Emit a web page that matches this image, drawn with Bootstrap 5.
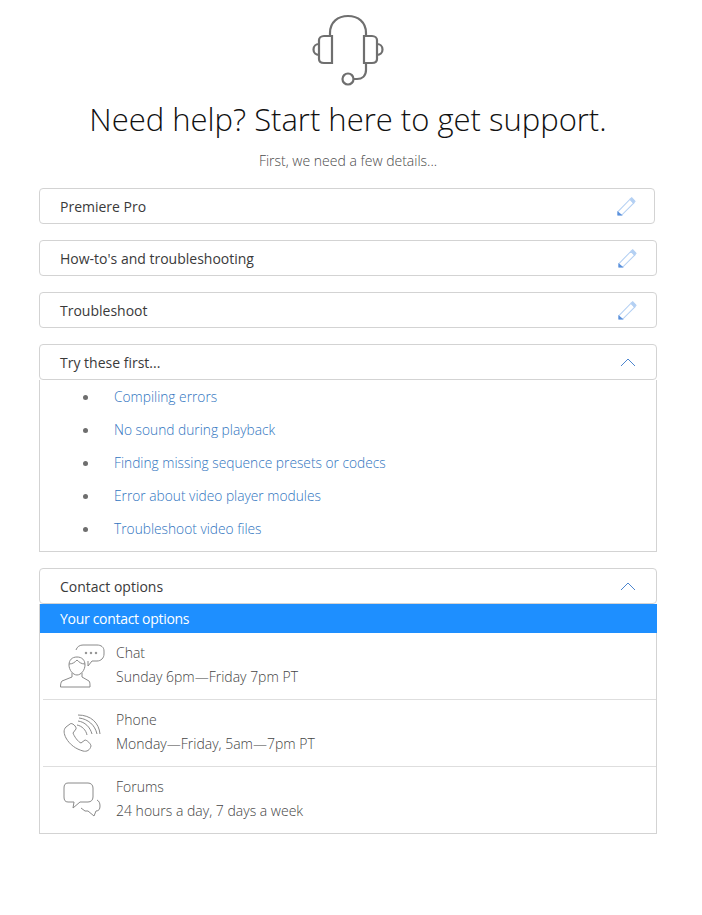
<!DOCTYPE html>
<html lang="en">
<head>
  <meta charset="UTF-8">
  <meta name="viewport" content="width=device-width, initial-scale=1">
  <title>Need help?</title>
  <link href="https://cdn.jsdelivr.net/npm/bootstrap@5.3.0/dist/css/bootstrap.min.css" rel="stylesheet">
  <style>
    body {
      font-family: "Open Sans", "Liberation Sans", sans-serif;
      font-weight: 300;
      color: #2c2c2c;
      background: #fff;
    }
    .help-page {
      width: 618px;
      margin-left: 39px;
      padding-top: 14px;
    }
    .help-top svg { display: block; margin: 0 auto; }
    .help-title {
      font-size: 31px;
      font-weight: 300;
      line-height: 40px;
      margin: 13px 0 0;
      color: #111;
      white-space: nowrap;
    }
    .help-sub {
      font-size: 14px;
      line-height: 20px;
      margin: 12px 0 17px;
      color: #4b4b4b;
    }
    .pick-box {
      height: 36px;
      border: 1px solid #d3d3d3;
      border-radius: 4px;
      padding: 0 19px 0 20px;
      font-size: 14px;
      font-weight: 400;
      margin-bottom: 16px;
      color: #3a3a3a;
    }
    .pick-box.first-box { margin-right: 2px; padding-right: 18px; }
    .pick-box.open-box { margin-bottom: 0; }
    .try-list {
      border: 1px solid #d3d3d3;
      border-top: 0;
      height: 172px;
      margin: 0 0 16px;
      padding: 0;
      list-style: none;
      font-size: 13.75px;
    }
    .try-list li {
      height: 33px;
      padding-left: 74px;
      position: relative;
      line-height: 33px;
    }
    .try-list li::before {
      content: "";
      position: absolute;
      left: 43px;
      top: 15px;
      width: 5px;
      height: 5px;
      border-radius: 50%;
      background: #6e6e6e;
    }
    .try-list a { color: #2f74c0; text-decoration: none; }
    .contact-wrap {
      border: 1px solid #d3d3d3;
      border-top: 0;
    }
    .contact-bar {
      background: #1e8fff;
      color: #fff;
      height: 29px;
      line-height: 29px;
      padding-left: 20px;
      font-size: 14px;
      font-weight: 400;
      letter-spacing: -.3px;
      margin: 0 -1px 0 0;
    }
    .contact-row {
      height: 67px;
      margin: 0 0 0 3px;
      border-bottom: 1px solid #dedede;
      color: #444;
      font-size: 14px;
    }
    .contact-row:last-child { border-bottom: 0; height: 66px; }
    .contact-ico { width: 73px; flex: none; display: flex; justify-content: center; padding-left: 4px; }
    .contact-txt { padding-bottom: 2px; }
    .contact-name { line-height: 24px; }
  </style>
</head>
<body>
  <div class="help-page">
    <div class="help-top text-center">
      <svg width="74" height="72" viewBox="0 0 74 72" fill="none" stroke="#6f6f6f" stroke-width="2.200">
        <path d="M19 22V19C19 8 27 2 37 2S55 8 55 19V22"/>
        <path d="M21 22H13C10 22 8 24 8 26V45C8 48 10 49 13 49H21Z"/>
        <path d="M53 22H61C64 22 66 24 66 26V45C66 48 64 49 61 49H53Z"/>
        <path d="M8 30C5 30 2.500 32 2.500 35.500S5 41 8 41"/>
        <path d="M66 30C69 30 71.500 32 71.500 35.500S69 41 66 41"/>
        <path d="M55 49V56C55 62 51 65 46 65H43"/>
        <circle cx="37" cy="65" r="5.500"/>
      </svg>
      <h1 class="help-title">Need help? Start here to get support.</h1>
      <p class="help-sub">First, we need a few details...</p>
    </div>

    <div class="pick-box first-box d-flex align-items-center justify-content-between">
      <span>Premiere Pro</span>
      <svg width="19" height="19" viewBox="0 0 20 20" fill="none" stroke="#b4d0f3" stroke-width="1.100">
        <path d="M1 15.500L13.500 2.500L17.500 6.500L5 19H1Z"/>
        <path d="M14 2L15.500 .8L19 4.500L17.500 6.500L14 2Z" fill="#b4d0f3"/>
        <path d="M1 16V19H4.500Z" fill="#5c92dc" stroke="#5c92dc"/>
      </svg>
    </div>
    <div class="pick-box d-flex align-items-center justify-content-between">
      <span>How-to's and troubleshooting</span>
      <svg width="19" height="19" viewBox="0 0 20 20" fill="none" stroke="#b4d0f3" stroke-width="1.100">
        <path d="M1 15.500L13.500 2.500L17.500 6.500L5 19H1Z"/>
        <path d="M14 2L15.500 .8L19 4.500L17.500 6.500L14 2Z" fill="#b4d0f3"/>
        <path d="M1 16V19H4.500Z" fill="#5c92dc" stroke="#5c92dc"/>
      </svg>
    </div>
    <div class="pick-box d-flex align-items-center justify-content-between">
      <span>Troubleshoot</span>
      <svg width="19" height="19" viewBox="0 0 20 20" fill="none" stroke="#b4d0f3" stroke-width="1.100">
        <path d="M1 15.500L13.500 2.500L17.500 6.500L5 19H1Z"/>
        <path d="M14 2L15.500 .8L19 4.500L17.500 6.500L14 2Z" fill="#b4d0f3"/>
        <path d="M1 16V19H4.500Z" fill="#5c92dc" stroke="#5c92dc"/>
      </svg>
    </div>

    <div class="pick-box open-box d-flex align-items-center justify-content-between">
      <span>Try these first...</span>
      <svg width="18" height="10" viewBox="0 0 18 10" fill="none" stroke="#4d86cf" stroke-width="1"><path d="M2 9L9 2L16 9"/></svg>
    </div>
    <ul class="try-list">
      <li><a href="#">Compiling errors</a></li>
      <li><a href="#">No sound during playback</a></li>
      <li><a href="#">Finding missing sequence presets or codecs</a></li>
      <li><a href="#">Error about video player modules</a></li>
      <li><a href="#">Troubleshoot video files</a></li>
    </ul>

    <div class="pick-box open-box d-flex align-items-center justify-content-between">
      <span>Contact options</span>
      <svg width="18" height="10" viewBox="0 0 18 10" fill="none" stroke="#4d86cf" stroke-width="1"><path d="M2 9L9 2L16 9"/></svg>
    </div>
    <div class="contact-wrap">
      <div class="contact-bar">Your contact options</div>
      <div class="contact-row d-flex align-items-center">
        <div class="contact-ico">
          <svg width="46" height="44" viewBox="0 0 46 44" fill="none" stroke="#8a8a8a" stroke-width="1">
            <path d="M17 6C18 2.500 21 1 24 1H38C42 1 45 3 45 7V10C45 14 42 17 38 17H33L29 22V17"/>
            <circle cx="27" cy="9" r=".8" fill="#8a8a8a"/><circle cx="32" cy="9" r=".8" fill="#8a8a8a"/><circle cx="37" cy="9" r=".8" fill="#8a8a8a"/>
            <path d="M10 21C10 16 13 13 18 13S26 16 26 21C26 26 22 31 18 31S10 26 10 21Z"/>
            <path d="M10 20C14 20 16 18 18 16C20 18 22 20 26 20"/>
            <path d="M13 29V33L3 37C2 38 1.500 40 1.500 43H31C31 40 31 38 30 37L23 33V29"/>
          </svg>
        </div>
        <div class="contact-txt">
          <div class="contact-name">Chat</div>
          <div class="contact-name">Sunday 6pm—Friday 7pm PT</div>
        </div>
      </div>
      <div class="contact-row d-flex align-items-center">
        <div class="contact-ico">
          <svg width="38" height="38" viewBox="0 0 38 38" fill="none" stroke="#8a8a8a" stroke-width="1">
            <path d="M7 10L3 13C0 16 1 20 3 24C7 31 13 35 20 37C24 38 27 36 28 32C28 30 24 26 22 26L18 29C15 28 11 22 10 19L13 15C14 13 9 8 7 10Z"/>
            <path d="M14 11C19 12 23 16 24 21"/>
            <path d="M15 7C22 8 27 13 29 20"/>
            <path d="M16 4C25 5 32 11 34 20"/>
            <path d="M15 1C28 1 36 9 37 20"/>
          </svg>
        </div>
        <div class="contact-txt">
          <div class="contact-name">Phone</div>
          <div class="contact-name">Monday—Friday, 5am—7pm PT</div>
        </div>
      </div>
      <div class="contact-row d-flex align-items-center">
        <div class="contact-ico">
          <svg width="38" height="36" viewBox="0 0 38 36" fill="none" stroke="#8a8a8a" stroke-width="1">
            <path d="M5 1H25C28 1 30 3 30 6V15C30 18 28 20 25 20H17L10 26L11 20H5C2 20 1 18 1 15V6C1 3 2 1 5 1Z"/>
            <path d="M34 18C36 19 37 21 37 24C37 27 36 29 33 29L31 34L25 29H22L18 26"/>
          </svg>
        </div>
        <div class="contact-txt">
          <div class="contact-name">Forums</div>
          <div class="contact-name">24 hours a day, 7 days a week</div>
        </div>
      </div>
    </div>
  </div>
  <script src="https://cdn.jsdelivr.net/npm/bootstrap@5.3.0/dist/js/bootstrap.bundle.min.js"></script>
</body>
</html>
